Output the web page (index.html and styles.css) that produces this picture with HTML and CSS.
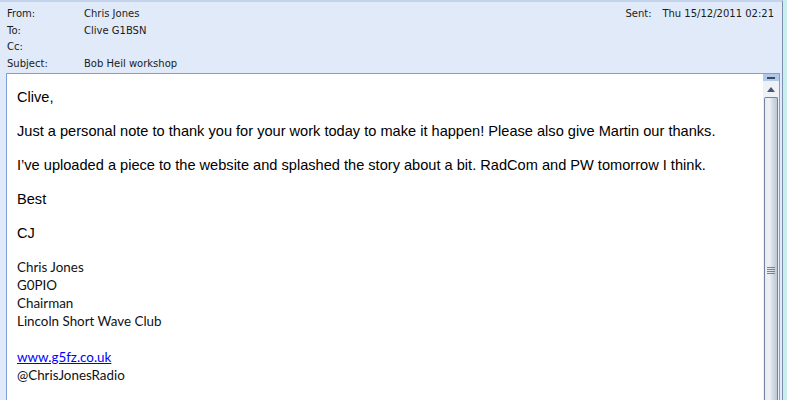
FILE: index.html
```html
<!DOCTYPE html>
<html lang="en">
<head>
  <meta charset="UTF-8">
  <title>Bob Heil workshop</title>
  <link rel="stylesheet" href="styles.css">
</head>
<body>
  <div class="window">
    <div class="header">
      <div class="row">
        <span class="label">From:</span>
        <span class="value">Chris Jones</span>
        <span class="sent-label">Sent:</span>
        <span class="sent-date">Thu 15/12/2011 02:21</span>
      </div>
      <div class="row">
        <span class="label">To:</span>
        <span class="value">Clive G1BSN</span>
      </div>
      <div class="row">
        <span class="label">Cc:</span>
        <span class="value"></span>
      </div>
      <div class="row">
        <span class="label">Subject:</span>
        <span class="value">Bob Heil workshop</span>
      </div>
    </div>

    <div class="message">
      <div class="content">
        <p>Clive,</p>
        <p>Just a personal note to thank you for your work today to make it happen! Please also give Martin our thanks.</p>
        <p>I&rsquo;ve uploaded a piece to the website and splashed the story about a bit. RadCom and PW tomorrow I think.</p>
        <p>Best</p>
        <p>CJ</p>
        <div class="signature">
          Chris Jones<br>
          G0PIO<br>
          Chairman<br>
          Lincoln Short Wave Club<br>
          <br>
          <a href="#">www.g5fz.co.uk</a><br>
          @ChrisJonesRadio
        </div>
      </div>

      <!-- vertical scrollbar -->
      <div class="scrollbar">
        <div class="split"><span class="dash"></span></div>
        <div class="arrow-up"><span class="triangle"></span></div>
        <div class="thumb">
          <div class="grip">
            <span></span><span></span><span></span><span></span>
          </div>
        </div>
      </div>
    </div>
  </div>
</body>
</html>
```

FILE: styles.css
```css
html {
  background-color: #c9eeee;
}
body {
  margin: 0;
  padding: 0;
  height: 400px;
  overflow: hidden;
}
.window {
  width: 783px;
  height: 400px;
  background-color: #e0eaf8;
  border-top: 2px solid #c3d4ec;
  border-right: 1px solid #7d8fae;
  box-sizing: border-box;
  display: flex;
  flex-direction: column;
}
.header {
  padding: 4px 8px 0 7px;
  font-family: "DejaVu Sans", sans-serif;
  font-size: 10px;
  color: #1b1b1b;
}
.row {
  display: flex;
  height: 16.5px;
  line-height: 16.5px;
}
.label {
  width: 77px;
}
.value {
  flex: 1;
}
.sent-label {
  width: 37px;
}
.message {
  margin: 1px 0 0 6px;
  width: 772px;
  flex: 1;
  display: flex;
  background-color: #fff;
  border: 1px solid #7e9fd6;
  border-bottom: none;
}
.content {
  flex: 1;
  padding: 0 10px;
  font-family: "Liberation Sans", Arial, sans-serif;
  font-size: 14.6px;
  color: #000;
}
.content p {
  margin: 16px 0;
  line-height: 18px;
}
.content p:first-child {
  margin-top: 14px;
}
.signature {
  font-family: Lato, "Liberation Sans", sans-serif;
  font-size: 13.4px;
  line-height: 18px;
  color: #111;
}
.signature a {
  color: #0000ff;
}
.scrollbar {
  width: 16px;
  display: flex;
  flex-direction: column;
  background-color: #eef1f5;
}
.split {
  height: 7px;
  background-color: #b3c9ea;
  display: flex;
  justify-content: center;
  align-items: center;
}
.dash {
  width: 8px;
  height: 2px;
  background-color: #3b4866;
}
.arrow-up {
  height: 16px;
  display: flex;
  justify-content: center;
  align-items: center;
}
.triangle {
  width: 0;
  height: 0;
  border-left: 4px solid transparent;
  border-right: 4px solid transparent;
  border-bottom: 5px solid #475774;
}
.thumb {
  flex: 1;
  margin: 0 1px 0 1px;
  border: 1px solid #7482a0;
  border-bottom: none;
  border-radius: 2px 2px 0 0;
  background: linear-gradient(to right, #e6eaf0 0%, #eef1f5 35%, #d3dae5 65%, #bcc7d8 100%);
  display: flex;
  justify-content: center;
  padding-top: 169px;
}
.grip {
  display: flex;
  flex-direction: column;
  gap: 1px;
}
.grip span {
  display: block;
  width: 8px;
  height: 1px;
  background-color: #7b8089;
}
```
